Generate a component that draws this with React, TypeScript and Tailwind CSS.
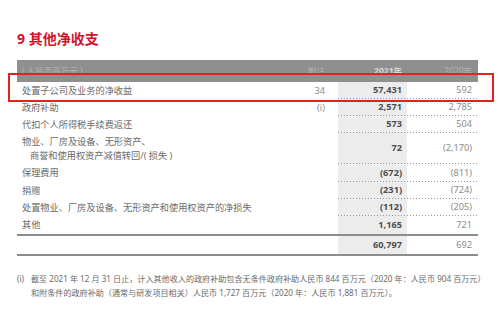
import React from "react";

type Row = { label: React.ReactNode; note?: string; a: string; b: string; h: string };

const dotted =
  "h-px w-full bg-[repeating-linear-gradient(to_right,#9a9a9a_0_1px,transparent_1px_3px)]";

const rows: Row[] = [
  { label: "处置子公司及业务的净收益", note: "34", a: "57,431", b: "592", h: "h-[17px]" },
  { label: "政府补助", note: "(i)", a: "2,571", b: "2,785", h: "h-[17px]" },
  { label: "代扣个人所得税手续费返还", a: "573", b: "504", h: "h-[17px]" },
  {
    label: (
      <div className="flex flex-col leading-[14px]">
        <span>物业、厂房及设备、无形资产、</span>
        <span className="pl-[8px]">商誉和使用权资产减值转回/( 损失 )</span>
      </div>
    ),
    a: "72",
    b: "(2,170)",
    h: "h-[31px]",
  },
  { label: "保理费用", a: "(672)", b: "(811)", h: "h-[18px]" },
  { label: "捐赠", a: "(231)", b: "(724)", h: "h-[17px]" },
  { label: "处置物业、厂房及设备、无形资产和使用权资产的净损失", a: "(112)", b: "(205)", h: "h-[17px]" },
  { label: "其他", a: "1,165", b: "721", h: "h-[18px]" },
];

export default function App() {
  return (
    <div className="relative w-[499px] h-[312px] bg-white overflow-hidden font-[family-name:'Noto_Sans','Noto_Sans_CJK_SC',sans-serif]">
      <div className="pl-[17px] w-[478px] pt-[29px]">
        <div className="text-[14px] leading-[20px] font-bold text-[#d0142c] h-[31px]">9 其他净收支</div>

        {/* header */}
        <div className="flex h-[22px] items-center bg-[#8f8f8f] text-[8.5px] text-[#b4b4b4]">
          <div className="flex-1 pl-[5px]">( 人民币百万元 )</div>
          <div className="w-[40px] text-right">附注</div>
          <div className="w-[13px]" />
          <div className="w-[69px] text-right pr-[5px] font-bold text-[#d6d6d6]">2021年</div>
          <div className="w-[71px] text-right pr-[6px]">2020年</div>
        </div>

        {rows.map((r, i) => (
          <div key={i} className={`flex ${r.h} text-[9.2px] leading-[14px]`}>
            <div className="flex-1 pl-[5px] flex items-center text-[#6b6b6b] whitespace-nowrap">{r.label}</div>
            <div className="w-[40px] flex items-center justify-end text-[#8d8d8d]">{r.note}</div>
            <div className="w-[13px]" />
            <div className="w-[140px] flex flex-col">
              <div className="flex flex-1">
                <div className="w-[69px] bg-[#ececec] flex items-center justify-end pr-[5px] font-bold text-[#4e4e4e]">
                  {r.a}
                </div>
                <div className="w-[71px] flex items-center justify-end pr-[6px] text-[#8d8d8d]">{r.b}</div>
              </div>
              {i < rows.length - 1 ? (
                <div className="relative h-px">
                  <div className="absolute left-0 top-0 w-[69px] h-px bg-[#ececec]" />
                  <div className={`relative ${dotted}`} />
                </div>
              ) : null}
            </div>
          </div>
        ))}

        {/* total */}
        <div className="h-[2px] bg-[#8c8c8c]" />
        <div className="flex h-[18px] text-[9.2px]">
          <div className="flex-1" />
          <div className="w-[40px]" />
          <div className="w-[13px]" />
          <div className="w-[69px] bg-[#ececec] flex items-center justify-end pr-[5px] font-bold text-[#4e4e4e]">
            60,797
          </div>
          <div className="w-[71px] flex items-center justify-end pr-[6px] text-[#8d8d8d]">692</div>
        </div>
        <div className="h-[2px] bg-[#8c8c8c]" />
      </div>

      {/* footnote */}
      <div className="mt-[16px] pl-[17px] flex text-[8.1px] leading-[14px] text-[#6b6b6b] whitespace-nowrap">
        <div className="w-[14px] shrink-0">(i)</div>
        <div className="flex flex-col">
          <span>截至 2021 年 12 月 31 日止，计入其他收入的政府补助包含无条件政府补助人民币 844 百万元（2020 年：人民币 904 百万元）</span>
          <span>和附条件的政府补助（通常与研发项目相关）人民币 1,727 百万元（2020 年：人民币 1,881 百万元）。</span>
        </div>
      </div>

      {/* red highlight box */}
      <div className="absolute left-[8px] top-[73px] w-[486px] h-[29px] border-2 border-[#e3211f]" />
    </div>
  );
}
